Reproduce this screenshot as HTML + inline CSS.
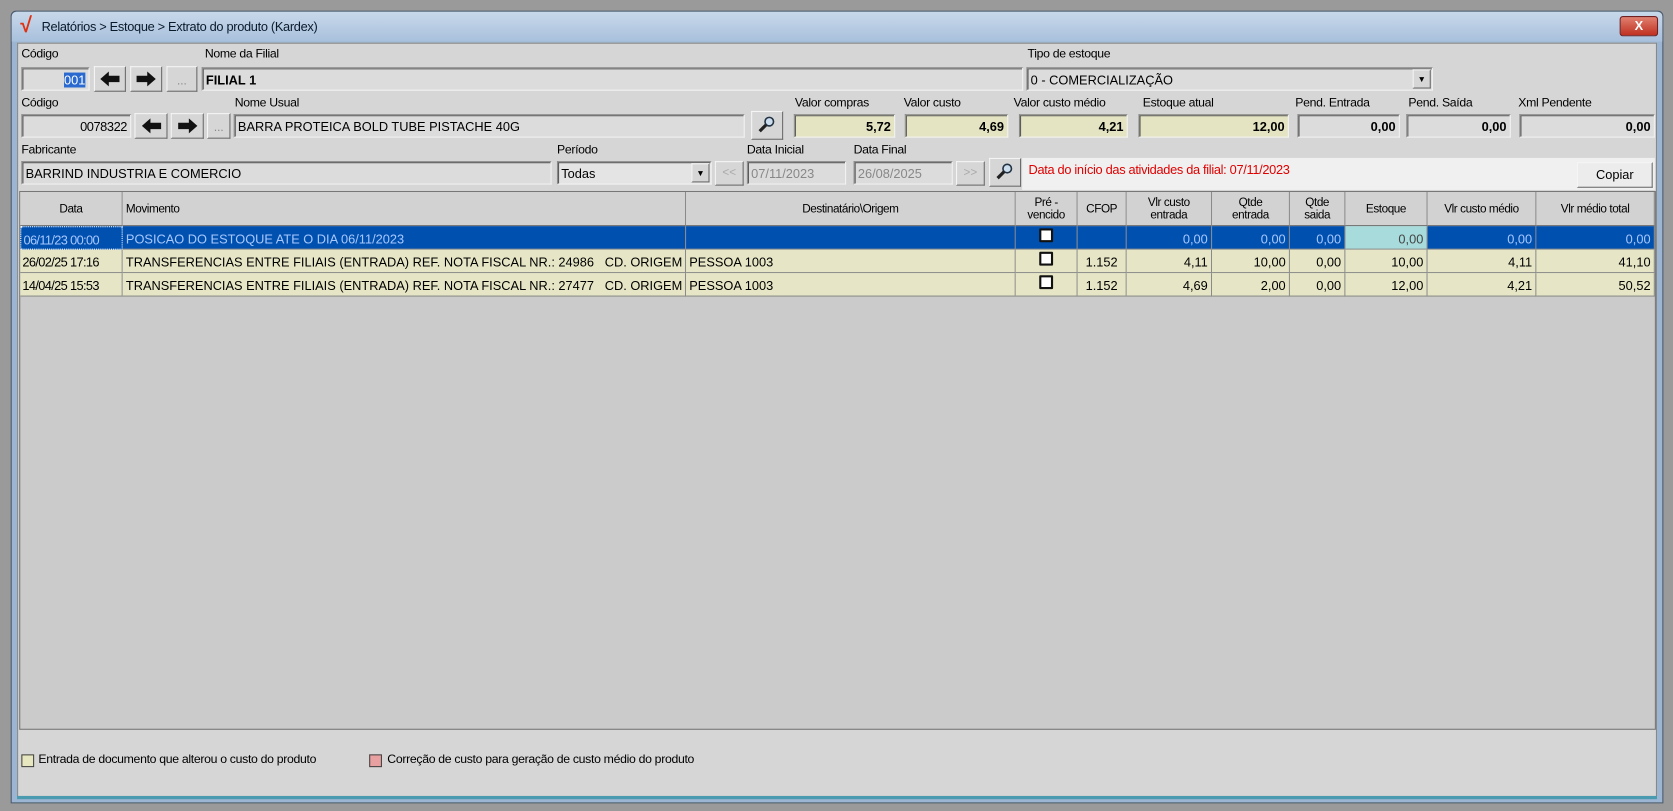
<!DOCTYPE html>
<html><head><meta charset="utf-8"><style>
html,body{margin:0;padding:0;width:1673px;height:811px;overflow:hidden;background:#9a9a9a}
#s{position:absolute;left:0;top:0;width:1568px;height:760px;transform:scale(1.06696);transform-origin:0 0;font-family:"Liberation Sans",sans-serif;font-size:12px;color:#000}
.a{position:absolute;box-sizing:border-box;white-space:nowrap;overflow:hidden}
.l{position:absolute;white-space:nowrap;font-size:11.5px;letter-spacing:-0.3px}
.in{position:absolute;box-sizing:border-box;background:#dcdcdc;border:1px solid #8a8a8a;border-right-color:#f2f2f2;border-bottom-color:#f2f2f2;box-shadow:inset 1px 1px 0 #5a5a5a;padding:4px 3px 0;font-size:12px;letter-spacing:0;white-space:nowrap;overflow:hidden;height:22px}
.y{background:#e4e4c2}
.r{text-align:right;font-weight:bold;letter-spacing:0}
.b{position:absolute;box-sizing:border-box;background:#d6d6d6;border:1px solid #f5f5f5;border-right-color:#6a6a6a;border-bottom-color:#6a6a6a;text-align:center;font-size:11px;color:#888}
.g{position:absolute;box-sizing:border-box;border-right:1px solid #8a8a8a;border-bottom:1px solid #8a8a8a;font-size:12px;letter-spacing:0;padding:5px 3px 0;white-space:nowrap;overflow:hidden;height:22px}
.d{letter-spacing:-0.6px;padding-left:2px}
.h{position:absolute;box-sizing:border-box;border-right:1px solid #8a8a8a;border-bottom:1px solid #6a6a6a;font-size:11px;letter-spacing:-0.4px;text-align:center;height:32px;display:flex;align-items:center;justify-content:center;line-height:12px;background:#d2d2d2}
.sel{background:#0050b0;color:#a8c8ff}
.bg{background:#e6e6c6}
.ck{display:inline-block;width:9px;height:9px;border:2px solid #111;background:#fff;border-radius:1px;margin-top:-2px}
</style></head><body><div id="s">
<div class="a" style="left:10px;top:10px;width:1549px;height:743px;background:#9bb5d2;border:1px solid #4a5a6a;border-radius:5px 5px 0 0"></div>
<div class="a" style="left:11px;top:11px;width:1547px;height:28px;background:linear-gradient(#c8d8ea,#a8c0dc);border-radius:5px 5px 0 0"></div>
<div class="l" style="left:19px;top:13px;font-size:20px;color:#e03010;font-weight:bold">√</div>
<div class="l" style="left:39px;top:18px;font-size:12px;color:#0a1a2a">Relatórios &gt; Estoque &gt; Extrato do produto (Kardex)</div>
<div class="a" style="left:1518px;top:15px;width:36px;height:19px;background:linear-gradient(#e08070,#c03020);border:1px solid #702020;border-radius:3px;color:#fff;font-weight:bold;text-align:center;font-size:12px;line-height:17px">X</div>
<div class="a" style="left:16px;top:40px;width:1537px;height:707px;background:#d6d6d6;border:1px solid #888"></div>
<div class="a" style="left:16px;top:746px;width:1537px;height:3px;background:#4a9ab0"></div>

<div class="l" style="left:20px;top:45px">Código</div>
<div class="l" style="left:192px;top:45px">Nome da Filial</div>
<div class="l" style="left:963px;top:45px">Tipo de estoque</div>
<div class="in" style="left:20px;top:63px;width:64px;text-align:right"><span style="background:#2a6ad0;color:#fff">001</span></div>
<div class="b" style="left:88px;top:62px;width:30px;height:24px"><svg width="22" height="16" viewBox="0 0 22 16" style="margin-top:3px"><path d="M2 8 L10 1 L10 5 L20 5 L20 11 L10 11 L10 15 Z" fill="#111"/></svg></div>
<div class="b" style="left:122px;top:62px;width:30px;height:24px"><svg width="22" height="16" viewBox="0 0 22 16" style="margin-top:3px"><path d="M20 8 L12 1 L12 5 L2 5 L2 11 L12 11 L12 15 Z" fill="#111"/></svg></div>
<div class="b" style="left:156px;top:62px;width:29px;height:24px;line-height:26px">...</div>
<div class="in" style="left:189px;top:63px;width:770px;font-weight:bold">FILIAL 1</div>
<div class="in" style="left:962px;top:63px;width:381px">0 - COMERCIALIZAÇÃO</div>
<div class="b" style="left:1324px;top:65px;width:17px;height:18px;color:#000;font-size:8px;line-height:18px">▼</div>

<div class="l" style="left:20px;top:91px">Código</div>
<div class="l" style="left:220px;top:91px">Nome Usual</div>
<div class="l" style="left:745px;top:91px">Valor compras</div>
<div class="l" style="left:847px;top:91px">Valor custo</div>
<div class="l" style="left:950px;top:91px">Valor custo médio</div>
<div class="l" style="left:1071px;top:91px">Estoque atual</div>
<div class="l" style="left:1214px;top:91px">Pend. Entrada</div>
<div class="l" style="left:1320px;top:91px">Pend. Saída</div>
<div class="l" style="left:1423px;top:91px">Xml Pendente</div>
<div class="in" style="left:20px;top:107px;width:103px;text-align:right;letter-spacing:-0.4px">0078322</div>
<div class="b" style="left:126px;top:106px;width:31px;height:24px"><svg width="22" height="16" viewBox="0 0 22 16" style="margin-top:3px"><path d="M2 8 L10 1 L10 5 L20 5 L20 11 L10 11 L10 15 Z" fill="#111"/></svg></div>
<div class="b" style="left:160px;top:106px;width:31px;height:24px"><svg width="22" height="16" viewBox="0 0 22 16" style="margin-top:3px"><path d="M20 8 L12 1 L12 5 L2 5 L2 11 L12 11 L12 15 Z" fill="#111"/></svg></div>
<div class="b" style="left:194px;top:106px;width:22px;height:24px;line-height:26px">...</div>
<div class="in" style="left:219px;top:107px;width:479px">BARRA PROTEICA BOLD TUBE PISTACHE 40G</div>
<div class="b" style="left:704px;top:104px;width:30px;height:27px"><svg width="18" height="18" viewBox="0 0 18 18" style="margin-top:3px"><circle cx="11" cy="6" r="4" fill="#cde" stroke="#234" stroke-width="1.5"/><path d="M8 9 L2 15" stroke="#222" stroke-width="3"/></svg></div>
<div class="in y r" style="left:744px;top:107px;width:95px">5,72</div>
<div class="in y r" style="left:848px;top:107px;width:97px">4,69</div>
<div class="in y r" style="left:955px;top:107px;width:102px">4,21</div>
<div class="in y r" style="left:1067px;top:107px;width:141px">12,00</div>
<div class="in r" style="left:1216px;top:107px;width:96px">0,00</div>
<div class="in r" style="left:1318px;top:107px;width:98px">0,00</div>
<div class="in r" style="left:1424px;top:107px;width:127px">0,00</div>

<div class="l" style="left:20px;top:135px">Fabricante</div>
<div class="l" style="left:522px;top:135px">Período</div>
<div class="l" style="left:700px;top:135px">Data Inicial</div>
<div class="l" style="left:800px;top:135px">Data Final</div>
<div class="in" style="left:20px;top:151px;width:497px">BARRIND INDUSTRIA E COMERCIO</div>
<div class="in" style="left:522px;top:151px;width:145px;background:#e4e4e4">Todas</div>
<div class="b" style="left:648px;top:153px;width:17px;height:18px;color:#000;font-size:8px;line-height:18px">▼</div>
<div class="b" style="left:670px;top:151px;width:27px;height:23px;line-height:21px;color:#aaa">&lt;&lt;</div>
<div class="in" style="left:700px;top:151px;width:93px;color:#888">07/11/2023</div>
<div class="in" style="left:800px;top:151px;width:93px;color:#888">26/08/2025</div>
<div class="b" style="left:896px;top:151px;width:27px;height:23px;line-height:21px;color:#aaa">&gt;&gt;</div>
<div class="b" style="left:927px;top:148px;width:30px;height:27px"><svg width="18" height="18" viewBox="0 0 18 18" style="margin-top:3px"><circle cx="11" cy="6" r="4" fill="#cde" stroke="#234" stroke-width="1.5"/><path d="M8 9 L2 15" stroke="#222" stroke-width="3"/></svg></div>
<div class="a" style="left:958px;top:148px;width:593px;height:30px;background:#f0f0f0"></div>
<div class="l" style="left:964px;top:152px;color:#e00000;font-size:12px">Data do início das atividades da filial: 07/11/2023</div>
<div class="b" style="left:1478px;top:152px;width:71px;height:24px;color:#000;font-size:12px;line-height:22px;background:#ececec">Copiar</div>

<div class="a" style="left:18px;top:179px;width:1534px;height:505px;background:#cbcbcb;border:1px solid #777"></div>
<div class="h" style="left:19px;top:180px;width:96px">Data</div>
<div class="h" style="left:115px;top:180px;width:528px;justify-content:flex-start;padding-left:3px">Movimento</div>
<div class="h" style="left:643px;top:180px;width:309px">Destinatário\Origem</div>
<div class="h" style="left:952px;top:180px;width:58px">Pré -<br>vencido</div>
<div class="h" style="left:1010px;top:180px;width:46px">CFOP</div>
<div class="h" style="left:1056px;top:180px;width:80px">Vlr custo<br>entrada</div>
<div class="h" style="left:1136px;top:180px;width:73px">Qtde<br>entrada</div>
<div class="h" style="left:1209px;top:180px;width:52px">Qtde<br>saida</div>
<div class="h" style="left:1261px;top:180px;width:77px">Estoque</div>
<div class="h" style="left:1338px;top:180px;width:102px">Vlr custo médio</div>
<div class="h" style="left:1440px;top:180px;width:111px">Vlr médio total</div>

<div class="g sel d" style="left:19px;top:212px;width:96px;border:1px dotted #fff">06/11/23 00:00</div>
<div class="g sel" style="left:115px;top:212px;width:528px">POSICAO DO ESTOQUE ATE O DIA 06/11/2023</div>
<div class="g sel" style="left:643px;top:212px;width:309px"></div>
<div class="g sel" style="left:952px;top:212px;width:58px;text-align:center;padding-top:4px"><span class="ck"></span></div>
<div class="g sel" style="left:1010px;top:212px;width:46px"></div>
<div class="g sel" style="left:1056px;top:212px;width:80px;text-align:right">0,00</div>
<div class="g sel" style="left:1136px;top:212px;width:73px;text-align:right">0,00</div>
<div class="g sel" style="left:1209px;top:212px;width:52px;text-align:right">0,00</div>
<div class="g" style="left:1261px;top:212px;width:77px;text-align:right;background:#a8dcdc;color:#444">0,00</div>
<div class="g sel" style="left:1338px;top:212px;width:102px;text-align:right">0,00</div>
<div class="g sel" style="left:1440px;top:212px;width:111px;text-align:right">0,00</div>

<div class="g bg d" style="left:19px;top:234px;width:96px">26/02/25 17:16</div>
<div class="g bg" style="left:115px;top:234px;width:528px">TRANSFERENCIAS ENTRE FILIAIS (ENTRADA) REF. NOTA FISCAL NR.: 24986&nbsp;&nbsp; CD. ORIGEM</div>
<div class="g bg" style="left:643px;top:234px;width:309px">PESSOA 1003</div>
<div class="g bg" style="left:952px;top:234px;width:58px;text-align:center;padding-top:4px"><span class="ck"></span></div>
<div class="g bg" style="left:1010px;top:234px;width:46px;text-align:center">1.152</div>
<div class="g bg" style="left:1056px;top:234px;width:80px;text-align:right">4,11</div>
<div class="g bg" style="left:1136px;top:234px;width:73px;text-align:right">10,00</div>
<div class="g bg" style="left:1209px;top:234px;width:52px;text-align:right">0,00</div>
<div class="g bg" style="left:1261px;top:234px;width:77px;text-align:right">10,00</div>
<div class="g bg" style="left:1338px;top:234px;width:102px;text-align:right">4,11</div>
<div class="g bg" style="left:1440px;top:234px;width:111px;text-align:right">41,10</div>

<div class="g bg d" style="left:19px;top:256px;width:96px">14/04/25 15:53</div>
<div class="g bg" style="left:115px;top:256px;width:528px">TRANSFERENCIAS ENTRE FILIAIS (ENTRADA) REF. NOTA FISCAL NR.: 27477&nbsp;&nbsp; CD. ORIGEM</div>
<div class="g bg" style="left:643px;top:256px;width:309px">PESSOA 1003</div>
<div class="g bg" style="left:952px;top:256px;width:58px;text-align:center;padding-top:4px"><span class="ck"></span></div>
<div class="g bg" style="left:1010px;top:256px;width:46px;text-align:center">1.152</div>
<div class="g bg" style="left:1056px;top:256px;width:80px;text-align:right">4,69</div>
<div class="g bg" style="left:1136px;top:256px;width:73px;text-align:right">2,00</div>
<div class="g bg" style="left:1209px;top:256px;width:52px;text-align:right">0,00</div>
<div class="g bg" style="left:1261px;top:256px;width:77px;text-align:right">12,00</div>
<div class="g bg" style="left:1338px;top:256px;width:102px;text-align:right">4,21</div>
<div class="g bg" style="left:1440px;top:256px;width:111px;text-align:right">50,52</div>

<div class="a" style="left:20px;top:707px;width:12px;height:12px;background:#e8e8c0;border:1px solid #444"></div>
<div class="l" style="left:36px;top:706px">Entrada de documento que alterou o custo do produto</div>
<div class="a" style="left:346px;top:707px;width:12px;height:12px;background:#e8a0a0;border:1px solid #444"></div>
<div class="l" style="left:363px;top:706px">Correção de custo para geração de custo médio do produto</div>
</div></body></html>
